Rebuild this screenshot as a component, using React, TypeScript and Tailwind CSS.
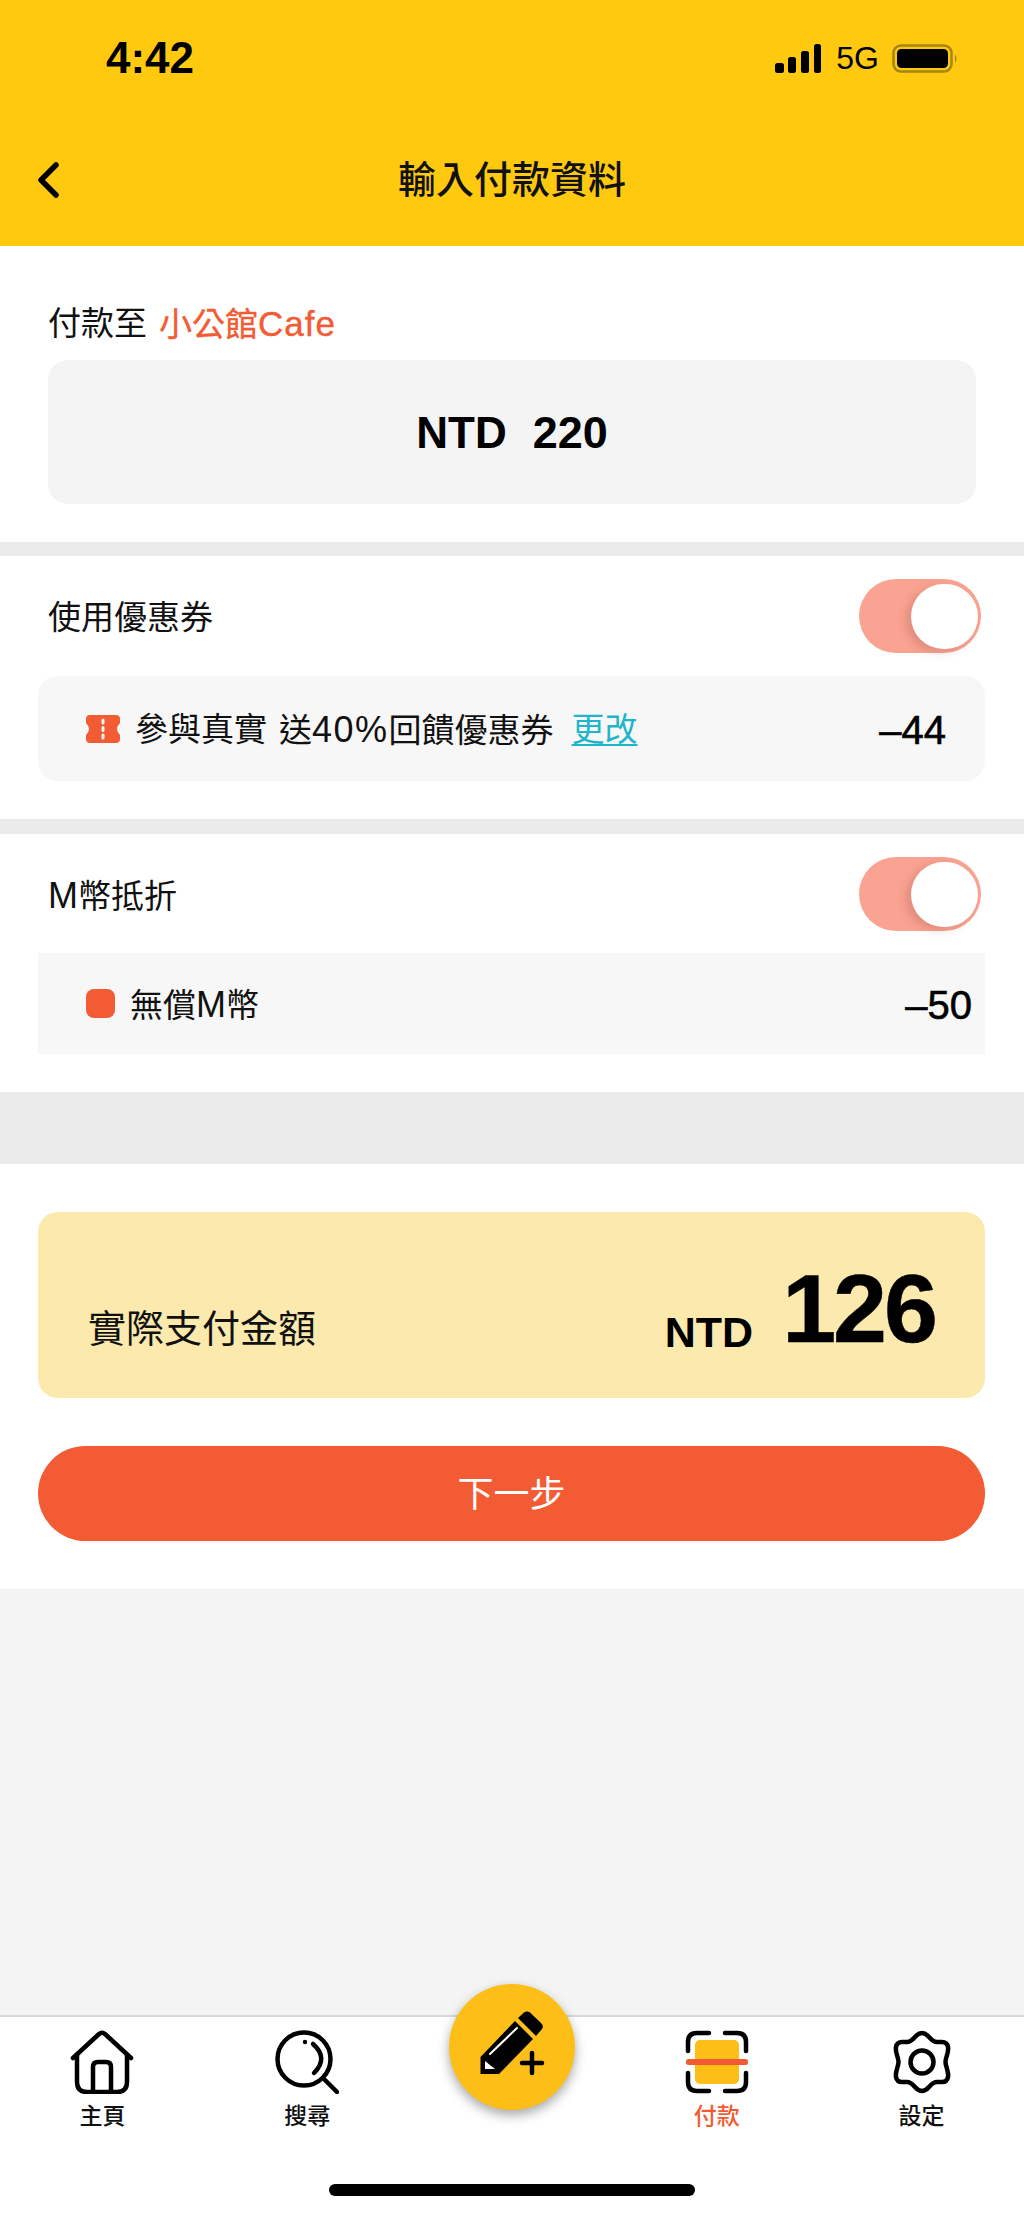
const FONT = "font-['Liberation_Sans','Noto_Sans_CJK_TC',sans-serif]";

function Toggle() {
  return (
    <div className="flex h-[74px] w-[122px] items-center justify-end rounded-full bg-[#fba392] pr-[3px]">
      <div className="h-[65px] w-[67px] rounded-full bg-white shadow-[-5px_3px_10px_rgba(120,60,40,0.22)]" />
    </div>
  );
}

function Row({ label }: { label: React.ReactNode }) {
  return (
    <div className="flex items-center justify-between pl-[48px] pr-[43px]">
      <span className="pt-[4px] text-[33px] leading-[44px] text-[#111]">{label}</span>
      <Toggle />
    </div>
  );
}

function Home() {
  return (
    <svg width="64" height="64" viewBox="0 0 64 64" fill="none" stroke="#000" strokeWidth="4.5" strokeLinecap="round" strokeLinejoin="round">
      <path d="M3 28 L29 4 Q32 1.5 35 4 L61 28" />
      <path d="M7 25 V52 Q7 62 17 62 H47 Q57 62 57 52 V25" />
      <path d="M23 62 V37 Q23 32 28 32 H36 Q41 32 41 37 V62" />
    </svg>
  );
}

function Search() {
  return (
    <svg width="64" height="64" viewBox="0 0 64 64" fill="none" stroke="#000" strokeWidth="4.5" strokeLinecap="round">
      <circle cx="29" cy="29" r="26.5" />
      <path d="M49 49 L62 62" />
      <path d="M38 14 Q54 28 39 43" />
      <circle cx="30" cy="12" r="2.2" fill="#000" stroke="none" />
    </svg>
  );
}

function Scan() {
  return (
    <svg width="64" height="64" viewBox="0 0 64 64" fill="none">
      <rect x="10" y="10" width="44" height="44" rx="5" fill="#fcbe17" />
      <g stroke="#000" strokeWidth="4.5" strokeLinecap="round" fill="none">
        <path d="M3 21 V12 Q3 3 12 3 H24" />
        <path d="M40 3 H52 Q61 3 61 12 V21" />
        <path d="M3 43 V52 Q3 61 12 61 H24" />
        <path d="M40 61 H52 Q61 61 61 52 V43" />
      </g>
      <rect x="1" y="29" width="62" height="6" rx="2.5" fill="#f25b33" />
    </svg>
  );
}

function Gear() {
  return (
    <svg width="60" height="64" viewBox="0 0 60 64" fill="none" stroke="#000" strokeWidth="4.5" strokeLinejoin="round" strokeLinecap="round">
      <path d="M23 7 Q30 -1 37 7 C40 10.5 42 12 45 12 H50 Q55 12 56 17 C57 23 53.5 27 53.5 32 C53.5 37 57 41 56 47 Q55 52 50 52 H45 C42 52 40 53.5 37 57 Q30 65 23 57 C20 53.5 18 52 15 52 H10 Q5 52 4 47 C3 41 6.5 37 6.5 32 C6.5 27 3 23 4 17 Q5 12 10 12 H15 C18 12 20 10.5 23 7 Z" />
      <circle cx="30" cy="32" r="11.5" />
    </svg>
  );
}

function Pencil() {
  return (
    <svg width="64" height="64" viewBox="0 0 64 64" className="overflow-visible">
      <path d="M38 7 L44 1.5 Q47 -0.5 50 1.5 L61 12 Q64 15 62 18 L56 25 Z" fill="#000" />
      <path d="M0.5 46 L35 10 L53 28 L19 63 H0.5 Z" fill="#000" />
      <path d="M5 50 V58 H15 Z" fill="#fff" />
      <path d="M10 43 L37 17" stroke="#fff" strokeWidth="2" strokeLinecap="round" />
      <path d="M52 42 V62 M42 52 H62" stroke="#000" strokeWidth="4.5" strokeLinecap="round" />
    </svg>
  );
}

function Tab({ icon, label, active }: { icon: React.ReactNode; label: string; active?: boolean }) {
  return (
    <div className="flex flex-col items-center">
      <div className="flex h-[64px] items-center justify-center">{icon}</div>
      <span className={`mt-[6px] text-[23px] leading-[32px] font-medium ${active ? "text-[#f25b33]" : "text-[#111]"}`}>{label}</span>
    </div>
  );
}

export default function App() {
  return (
    <div className={`relative flex h-[2215px] w-[1024px] flex-col overflow-hidden bg-[#f4f4f4] ${FONT}`}>
      <header className="h-[246px] bg-[#ffc910]">
        <div className="flex h-[116px] items-center justify-between pl-[106px] pr-[66px]">
          <span className="text-[44px] leading-[48px] font-bold text-black">4:42</span>
          <div className="flex items-center">
            <svg width="46" height="29" viewBox="0 0 46 29" fill="#000">
              <rect x="0" y="19" width="9" height="10" rx="2.5" />
              <rect x="13" y="13" width="8" height="16" rx="2.5" />
              <rect x="26" y="7" width="8" height="22" rx="2.5" />
              <rect x="39" y="0" width="7" height="29" rx="2.5" />
            </svg>
            <span className="ml-[15px] text-[32px] leading-[36px] text-black">5G</span>
            <svg className="ml-[13px]" width="66" height="29" viewBox="0 0 66 29">
              <rect x="1.5" y="1.5" width="58" height="26" rx="7.5" fill="none" stroke="#a58418" strokeWidth="2.5" />
              <rect x="5" y="5" width="51" height="19" rx="4.5" fill="#000" />
              <path d="M63 10 Q66 14.5 63 19 Z" fill="#a58418" />
            </svg>
          </div>
        </div>
        <div className="relative flex h-[128px] items-center justify-center">
          <svg className="absolute left-[36px] top-[46px]" width="24" height="36" viewBox="0 0 24 36" fill="none" stroke="#000" strokeWidth="5.5" strokeLinecap="round" strokeLinejoin="round">
            <path d="M20 3 L5 18 L20 33" />
          </svg>
          <span className="text-[38px] leading-[48px] font-medium text-[#111]">輸入付款資料</span>
        </div>
      </header>

      <section className="bg-white px-[48px] pt-[56px] pb-[38px]">
        <div className="flex h-[44px] text-[33px] leading-[44px]">
          <span className="text-[#111]">付款至</span>
          <span className="ml-[12px] text-[#f25b33] [-webkit-text-stroke:0.4px_#f25b33]">
            小公館<span className="text-[35px] tracking-[1px]">Cafe</span>
          </span>
        </div>
        <div className="mt-[14px] flex h-[144px] items-center justify-center rounded-[20px] bg-[#f4f4f4] pt-[2px] text-black">
          <span className="text-[44px] font-bold">NTD</span>
          <span className="ml-[26px] text-[45px] font-bold">220</span>
        </div>
      </section>
      <div className="h-[14px] bg-[#ebebeb]" />

      <section className="bg-white pt-[23px] pb-[38px]">
        <Row label="使用優惠券" />
        <div className="ml-[38px] mr-[39px] mt-[23px] flex h-[105px] items-center justify-between rounded-[20px] bg-[#f7f7f7] pl-[48px] pr-[39px]">
          <div className="flex items-center">
            <svg width="34" height="28" viewBox="0 0 34 28">
              <path d="M4 0 H30 Q34 0 34 4 V8 Q28 14 34 20 V24 Q34 28 30 28 H4 Q0 28 0 24 V20 Q6 14 0 8 V4 Q0 0 4 0 Z" fill="#f25b33" />
              <path d="M17 5 V8 M17 12.5 V15.5 M17 20 V23" stroke="#f7f7f7" strokeWidth="3" strokeLinecap="round" />
            </svg>
            <span className="ml-[15px] pt-[3px] text-[33px] leading-[44px] text-[#111]">參與真實</span>
            <span className="ml-[12px] pt-[3px] text-[33px] leading-[44px] text-[#111]">
              送<span className="text-[36px] tracking-[1.5px]">40%</span>回饋優惠券
            </span>
            <span className="ml-[18px] pt-[3px] text-[33px] leading-[44px] text-[#1fb6cc] underline decoration-2 underline-offset-[3px]">更改</span>
          </div>
          <span className="pt-[2px] text-[40px] leading-[44px] text-black [-webkit-text-stroke:0.6px_#000]">–44</span>
        </div>
      </section>
      <div className="h-[15px] bg-[#ebebeb]" />

      <section className="bg-white pt-[23px] pb-[38px]">
        <Row
          label={
            <>
              <span className="text-[36px]">M</span>幣抵折
            </>
          }
        />
        <div className="ml-[38px] mr-[39px] mt-[22px] flex h-[101px] items-center justify-between bg-[#f7f7f7] pl-[48px] pr-[13px]">
          <div className="flex items-center">
            <div className="h-[29px] w-[29px] rounded-[8px] bg-[#f25b33]" />
            <span className="ml-[15px] pt-[3px] text-[33px] leading-[44px] text-[#111]">
              無償<span className="text-[36px]">M</span>幣
            </span>
          </div>
          <span className="pt-[2px] text-[40px] leading-[44px] text-black [-webkit-text-stroke:0.6px_#000]">–50</span>
        </div>
      </section>
      <div className="h-[72px] bg-[#ebebeb]" />

      <section className="bg-white pl-[38px] pr-[39px] pt-[48px] pb-[48px]">
        <div className="flex h-[186px] items-end justify-between rounded-[20px] bg-[#fbe9ad] pb-[40px] pl-[50px] pr-[50px]">
          <span className="mb-[3px] text-[38px] leading-[52px] text-[#111]">實際支付金額</span>
          <div className="flex items-end">
            <span className="text-[43px] leading-[52px] font-bold text-black">NTD</span>
            <span className="mb-[9px] ml-[29px] text-[97px] leading-[80px] font-bold tracking-[-3px] text-black [-webkit-text-stroke:0.5px_#000]">126</span>
          </div>
        </div>
        <div className="mt-[48px] flex h-[95px] items-center justify-center rounded-full bg-[#f25b33] pt-[2px] text-[36px] text-white">下一步</div>
      </section>

      <div className="flex-1" />

      <nav className="relative h-[200px] border-t-2 border-[#d8d8d8] bg-white pt-[13px]">
        <div className="grid grid-cols-5">
          <Tab icon={<Home />} label="主頁" />
          <Tab icon={<Search />} label="搜尋" />
          <div />
          <Tab icon={<Scan />} label="付款" active />
          <Tab icon={<Gear />} label="設定" />
        </div>
        <div className="absolute left-[449px] top-[-33px] flex h-[126px] w-[126px] items-center justify-center rounded-full bg-[#fcbe17] pb-[9px] shadow-[0_5px_12px_rgba(0,0,0,0.35)]">
          <Pencil />
        </div>
        <div className="absolute bottom-[19px] left-[329px] h-[12px] w-[366px] rounded-full bg-black" />
      </nav>
    </div>
  );
}
